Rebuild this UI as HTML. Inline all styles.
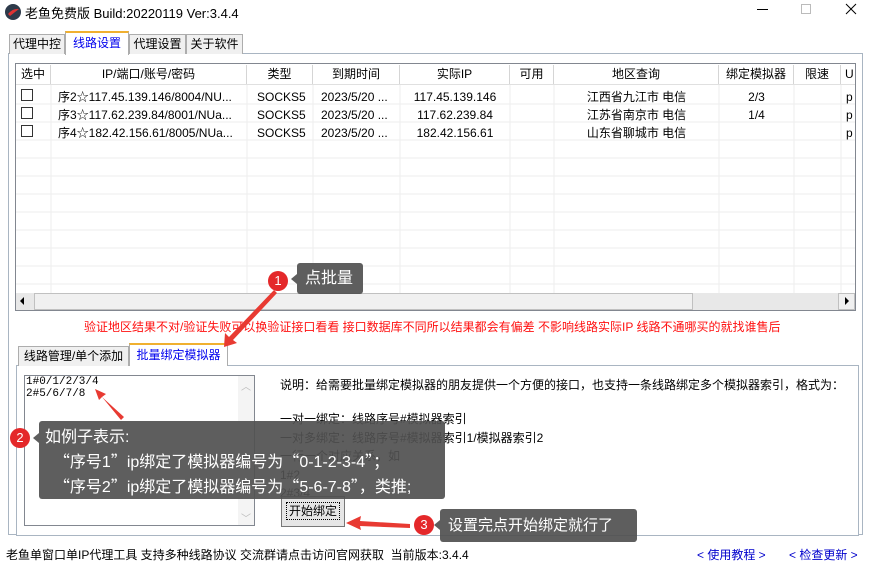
<!DOCTYPE html>
<html><head><meta charset="utf-8"><style>
*{margin:0;padding:0;box-sizing:border-box}
body{width:871px;height:565px;background:#fff;font-family:"Liberation Sans","Noto Sans CJK SC",sans-serif;font-size:12px;color:#000;position:relative;overflow:hidden}
.a{position:absolute;white-space:nowrap}
.tab{position:absolute;border:1px solid #adadad;border-bottom:none;background:#f0f0f0;text-align:center;line-height:18px;font-size:12px}
.hd{position:absolute;top:65px;height:19px;border-right:1px solid #d5d5d5;background:#fff;text-align:center;line-height:19px}
.cb{position:absolute;width:12px;height:12px;border:1px solid #333;background:#fff}
.tip{position:absolute;background:rgba(80,80,80,.92);color:#fff;border-radius:3px}
.circ{position:absolute;width:20px;height:20px;border-radius:50%;background:#e4282a;color:#fff;text-align:center;line-height:20px;font-size:13px}
</style></head><body>
<svg class="a" style="left:4px;top:3px" width="18" height="18"><circle cx="9" cy="9" r="8" fill="#2d3a4a"/><path d="M4 11 Q9 5 15 6 Q11 9 6 13Z" fill="#d33"/></svg>
<div class="a" style="left:25px;top:3px;font-size:13px">老鱼免费版 Build:20220119 Ver:3.4.4</div>
<div class="a" style="left:757px;top:9px;width:11px;height:1px;background:#000"></div>
<div class="a" style="left:801px;top:4px;width:10px;height:10px;border:1px solid #bbb"></div>
<svg class="a" style="left:845px;top:3px" width="12" height="12"><path d="M1 1L11 11M11 1L1 11" stroke="#000" stroke-width="1"/></svg>
<div class="a" style="left:8px;top:53px;width:855px;height:482px;border:1px solid #a9b5c2;background:#fff"></div>
<div class="tab" style="left:9px;top:34px;width:56px;height:20px">代理中控</div>
<div class="tab" style="left:65px;top:31px;width:64px;height:24px;background:#fff;border-top:2px solid #f0b030;color:#0000ee;line-height:21px;z-index:2">线路设置</div>
<div class="tab" style="left:129px;top:34px;width:57px;height:20px">代理设置</div>
<div class="tab" style="left:186px;top:34px;width:57px;height:20px">关于软件</div>
<div class="a" style="left:15px;top:63px;width:841px;height:248px;border:1px solid #828790;background:#fff;overflow:hidden">
<div style="position:absolute;left:0;top:0;width:840px;height:20px;background:#fff;border-bottom:1px solid #e5e5e5"></div>
</div>
<div class="hd" style="left:16px;width:35px">选中</div>
<div class="hd" style="left:51px;width:196px">IP/端口/账号/密码</div>
<div class="hd" style="left:247px;width:66px">类型</div>
<div class="hd" style="left:313px;width:87px">到期时间</div>
<div class="hd" style="left:400px;width:110px">实际IP</div>
<div class="hd" style="left:510px;width:44px">可用</div>
<div class="hd" style="left:554px;width:165px">地区查询</div>
<div class="hd" style="left:719px;width:75px">绑定模拟器</div>
<div class="hd" style="left:794px;width:47px">限速</div>
<div class="hd" style="left:841px;width:14px;text-align:left;padding-left:4px;border-right:none">U</div>
<div class="a" style="left:16px;top:84px;width:839px;height:1px;background:#e0e0e0"></div>
<svg class="a" style="left:16px;top:85px" width="839" height="208"><g stroke="#eeeeee"><path d="M35 0V208M231 0V208M297 0V208M384 0V208M494 0V208M538 0V208M703 0V208M778 0V208M825 0V208"/><path d="M0 19H839M0 37H839M0 55H839M0 73H839M0 91H839M0 109H839M0 127H839M0 145H839M0 163H839M0 181H839M0 199H839"/></g></svg>
<div class="cb" style="left:21px;top:89px"></div>
<div class="cb" style="left:21px;top:107px"></div>
<div class="cb" style="left:21px;top:125px"></div>
<div class="a" style="left:58px;top:88px;line-height:18px">序2☆117.45.139.146/8004/NU...<br>序3☆117.62.239.84/8001/NUa...<br>序4☆182.42.156.61/8005/NUa...</div>
<div class="a" style="left:257px;top:88px;line-height:18px">SOCKS5<br>SOCKS5<br>SOCKS5</div>
<div class="a" style="left:321px;top:88px;line-height:18px">2023/5/20 ...<br>2023/5/20 ...<br>2023/5/20 ...</div>
<div class="a" style="left:400px;top:88px;width:110px;text-align:center;line-height:18px">117.45.139.146<br>117.62.239.84<br>182.42.156.61</div>
<div class="a" style="left:554px;top:88px;width:165px;text-align:center;line-height:18px">江西省九江市 电信<br>江苏省南京市 电信<br>山东省聊城市 电信</div>
<div class="a" style="left:719px;top:88px;width:75px;text-align:center;line-height:18px">2/3<br>1/4</div>
<div class="a" style="left:846px;top:88px;line-height:18px">p<br>p<br>p</div>
<div class="a" style="left:16px;top:293px;width:839px;height:17px;background:#e8e8e8"></div>
<div class="a" style="left:34px;top:293px;width:659px;height:17px;background:#f0f0f0;border:1px solid #c0c0c0"></div>
<div class="a" style="left:20px;top:297px;width:0;height:0;border-top:4px solid transparent;border-bottom:4px solid transparent;border-right:4px solid #000"></div>
<div class="a" style="left:838px;top:293px;width:17px;height:17px;border:1px solid #c0c0c0;background:#f0f0f0"></div>
<div class="a" style="left:845px;top:297px;width:0;height:0;border-top:4px solid transparent;border-bottom:4px solid transparent;border-left:4px solid #000"></div>
<div class="a" style="left:84px;top:318px;color:#ff1010">验证地区结果不对/验证失败可以换验证接口看看 接口数据库不同所以结果都会有偏差 不影响线路实际IP 线路不通哪买的就找谁售后</div>
<div class="a" style="left:16px;top:365px;width:843px;height:171px;border:1px solid #a9b5c2;background:#fff"></div>
<div class="tab" style="left:18px;top:346px;width:111px;height:20px">线路管理/单个添加</div>
<div class="tab" style="left:129px;top:343px;width:99px;height:23px;background:#fff;border-top:2px solid #f0b030;color:#0000ee;line-height:20px">批量绑定模拟器</div>
<div class="a" style="left:24px;top:375px;width:231px;height:151px;border:1px solid #828790;background:#fff"></div>
<div class="a" style="left:26px;top:376px;font-family:'Liberation Mono',monospace;font-size:11px;line-height:12px">1#0/1/2/3/4<br>2#5/6/7/8</div>
<div class="a" style="left:238px;top:376px;width:16px;height:149px;background:#f4f4f4"></div>
<div class="a" style="left:241px;top:378px;color:#bbb;font-size:10px">︿</div>
<div class="a" style="left:241px;top:510px;color:#bbb;font-size:10px">﹀</div>
<div class="a" style="left:280px;top:376px;line-height:19px">说明：给需要批量绑定模拟器的朋友提供一个方便的接口，也支持一条线路绑定多个模拟器索引，格式为：</div>
<div class="a" style="left:280px;top:410px;line-height:18.5px">一对一绑定：线路序号#模拟器索引<br>一对多绑定：线路序号#模拟器索引1/模拟器索引2<br>一行一个对应关系，如<br>1#2<br>2#3/4</div>
<div class="a" style="left:281px;top:496px;width:64px;height:31px;border:1px solid #777;background:#e6e6e6;text-align:center;line-height:28px"><span style="outline:1px dotted #000;padding:1px 2px">开始绑定</span></div>
<div class="a" style="left:6px;top:546px">老鱼单窗口单IP代理工具 支持多种线路协议 交流群请点击访问官网获取&nbsp; 当前版本:3.4.4</div>
<div class="a" style="left:697px;top:546px;color:#0000cc">&lt; 使用教程 &gt;</div>
<div class="a" style="left:789px;top:546px;color:#0000cc">&lt; 检查更新 &gt;</div>
<div class="tip" style="left:297px;top:263px;width:66px;height:31px;font-size:16px;line-height:31px;padding-left:8px">点批量</div>
<div class="a" style="left:291px;top:274px;width:0;height:0;border-top:5px solid transparent;border-bottom:5px solid transparent;border-right:6px solid rgba(80,80,80,.92)"></div>
<div class="circ" style="left:268px;top:271px">1</div>
<div class="tip" style="left:39px;top:421px;width:406px;height:78px;font-size:16px;line-height:22px;padding:6px 0 0 6px">如例子表示:<br>&nbsp;&nbsp;<span style="font-family:'Noto Sans CJK SC'">“</span>序号1<span style="font-family:'Noto Sans CJK SC'">”</span>ip绑定了模拟器编号为<span style="font-family:'Noto Sans CJK SC'">“</span>0-1-2-3-4<span style="font-family:'Noto Sans CJK SC'">”；</span><br>&nbsp;&nbsp;<span style="font-family:'Noto Sans CJK SC'">“</span>序号2<span style="font-family:'Noto Sans CJK SC'">”</span>ip绑定了模拟器编号为<span style="font-family:'Noto Sans CJK SC'">“</span>5-6-7-8<span style="font-family:'Noto Sans CJK SC'">”，</span>类推;</div>
<div class="a" style="left:33px;top:433px;width:0;height:0;border-top:5px solid transparent;border-bottom:5px solid transparent;border-right:6px solid rgba(80,80,80,.92)"></div>
<div class="circ" style="left:10px;top:428px">2</div>
<div class="tip" style="left:440px;top:509px;width:197px;height:33px;font-size:15px;line-height:33px;padding-left:8px">设置完点开始绑定就行了</div>
<div class="a" style="left:434px;top:520px;width:0;height:0;border-top:5px solid transparent;border-bottom:5px solid transparent;border-right:6px solid rgba(80,80,80,.92)"></div>
<div class="circ" style="left:414px;top:515px">3</div>
<svg class="a" style="left:0;top:0" width="871" height="565">
<g fill="#e83a32">
<path d="M274 290 L229 337 L225 333 L224 347 L237 343 L233 340 L277 293Z"/>
<path d="M124 417 L102 397 L106 394 L95 389 L99 400 L102 397 L121 420Z"/>
<path d="M410 524 L360 521 L361 516 L346 523 L361 530 L360 526 L410 528Z"/>
</g></svg>
</body></html>
